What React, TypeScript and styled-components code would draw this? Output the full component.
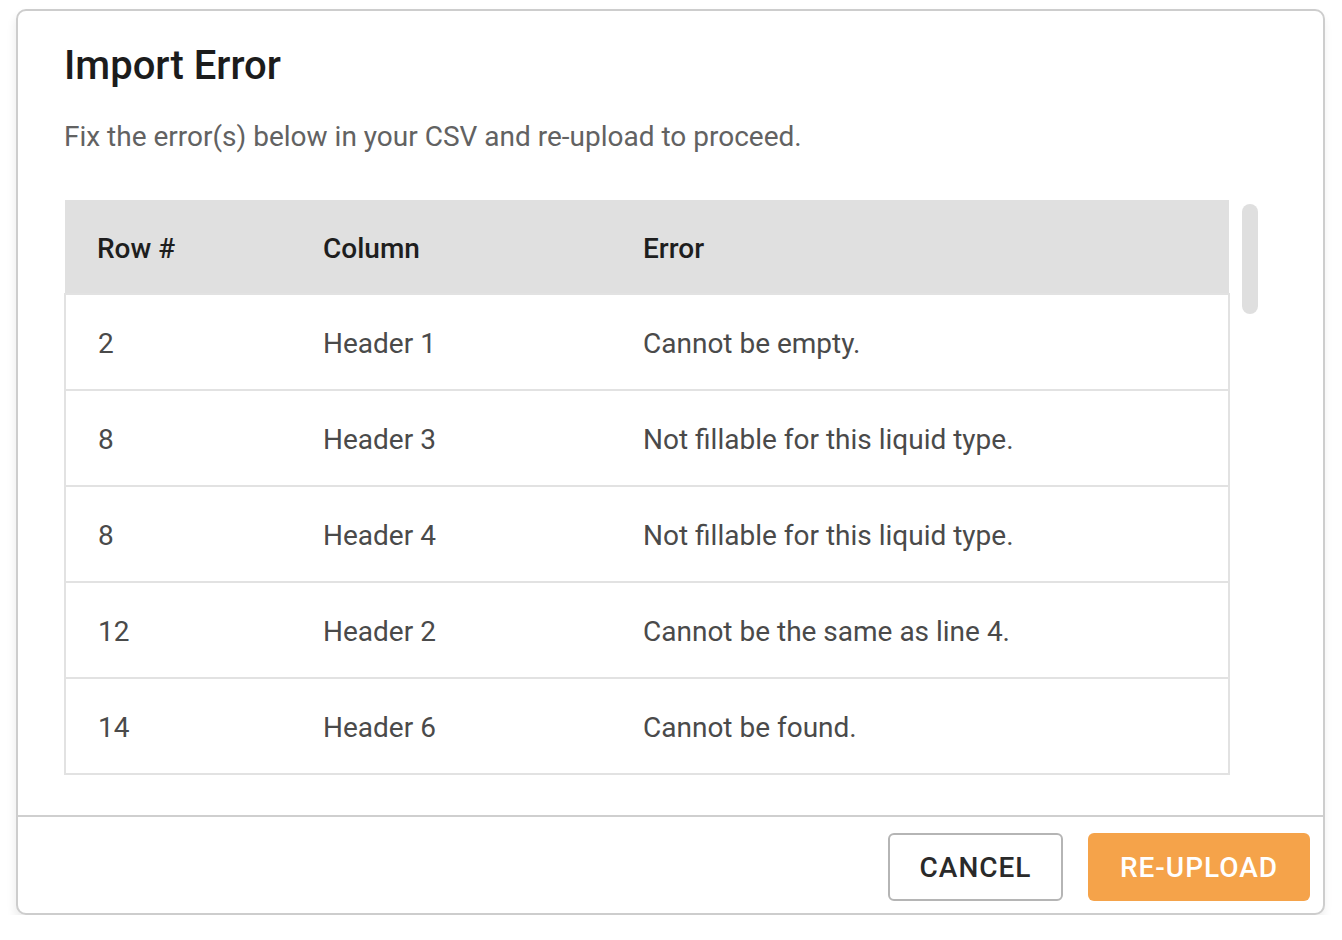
import styled, { createGlobalStyle } from "styled-components";

type ErrorRow = {
    row: number;
    column: string;
    message: string;
};

const errors: ErrorRow[] = [
    { row: 2, column: "Header 1", message: "Cannot be empty." },
    { row: 8, column: "Header 3", message: "Not fillable for this liquid type." },
    { row: 8, column: "Header 4", message: "Not fillable for this liquid type." },
    { row: 12, column: "Header 2", message: "Cannot be the same as line 4." },
    { row: 14, column: "Header 6", message: "Cannot be found." },
];

function App() {
    return (
        <>
            <GlobalStyle />
            <Page>
                <Dialog>
                    <DialogBody>
                        <Title>Import Error</Title>
                        <Subtitle>Fix the error(s) below in your CSV and re-upload to proceed.</Subtitle>
                        <TableArea>
                            <ErrorTable>
                                <thead>
                                    <tr>
                                        <HeadCell $width={226}>Row #</HeadCell>
                                        <HeadCell $width={320}>Column</HeadCell>
                                        <HeadCell>Error</HeadCell>
                                    </tr>
                                </thead>
                                <tbody>
                                    {errors.map((e, i) => (
                                        <BodyRow key={i}>
                                            <BodyCell>{e.row}</BodyCell>
                                            <BodyCell>{e.column}</BodyCell>
                                            <BodyCell>{e.message}</BodyCell>
                                        </BodyRow>
                                    ))}
                                </tbody>
                            </ErrorTable>
                            <ScrollTrack>
                                <ScrollThumb />
                            </ScrollTrack>
                        </TableArea>
                    </DialogBody>
                    <Footer>
                        <CancelButton>CANCEL</CancelButton>
                        <UploadButton>RE-UPLOAD</UploadButton>
                    </Footer>
                </Dialog>
            </Page>
        </>
    );
}

const GlobalStyle = createGlobalStyle`
    body {
        margin: 0;
        background: #FFFFFF;
        font-family: Roboto, "Noto Sans", sans-serif;
    }
`;

const Page = styled.div`
    padding: 9px 16px 0 16px;
`;

const Dialog = styled.div`
    width: 1309px;
    height: 906px;
    box-sizing: border-box;
    border: 2px solid #CDCDCD;
    border-radius: 10px;
    background: #FFFFFF;
    box-shadow: -1px 6px 10px rgba(0, 0, 0, 0.08);
    display: flex;
    flex-direction: column;
    overflow: hidden;
`;

const DialogBody = styled.div`
    flex: 1;
    padding: 0 0 0 46px;
    display: flex;
    flex-direction: column;
`;

const Title = styled.h1`
    margin: 31px 0 0 0;
    font-size: 40px;
    line-height: 47px;
    font-weight: 500;
    color: #1C1C1C;
`;

const Subtitle = styled.p`
    margin: 32px 0 0 0;
    font-size: 28px;
    line-height: 32px;
    color: #626262;
`;

const TableArea = styled.div`
    margin-top: 47px;
    display: flex;
    align-items: flex-start;
`;

const ErrorTable = styled.table`
    width: 1166px;
    border-collapse: collapse;
    table-layout: fixed;
`;

const HeadCell = styled.th<{ $width?: number }>`
    width: ${(p) => (p.$width ? `${p.$width}px` : "auto")};
    height: 94px;
    padding: 3px 0 0 32px;
    box-sizing: border-box;
    background: #E0E0E0;
    text-align: left;
    font-size: 28px;
    font-weight: 500;
    color: #1E1E1E;
`;

const BodyRow = styled.tr`
    border: 2px solid #E2E2E2;
`;

const BodyCell = styled.td`
    height: 91px;
    padding: 3px 0 0 32px;
    font-size: 28px;
    color: #4A4A4A;
`;

const ScrollTrack = styled.div`
    width: 16px;
    margin: 4px 0 0 12px;
`;

const ScrollThumb = styled.div`
    height: 110px;
    border-radius: 8px;
    background: #DFDFDF;
`;

const Footer = styled.div`
    border-top: 2px solid #CFCFCF;
    height: 98px;
    box-sizing: border-box;
    padding: 16px 13px 0 0;
    display: flex;
    justify-content: flex-end;
    align-items: flex-start;
    gap: 25px;
`;

const BaseButton = styled.button`
    height: 68px;
    box-sizing: border-box;
    border-radius: 6px;
    font-family: Roboto, "Noto Sans", sans-serif;
    font-size: 28px;
    font-weight: 500;
    letter-spacing: 1px;
    cursor: pointer;
`;

const CancelButton = styled(BaseButton)`
    width: 175px;
    background: #FFFFFF;
    border: 2px solid #B5B5B5;
    color: #2A2A2A;
`;

const UploadButton = styled(BaseButton)`
    width: 222px;
    background: #F5A34A;
    border: none;
    color: #FFFFFF;
`;

export default App;
